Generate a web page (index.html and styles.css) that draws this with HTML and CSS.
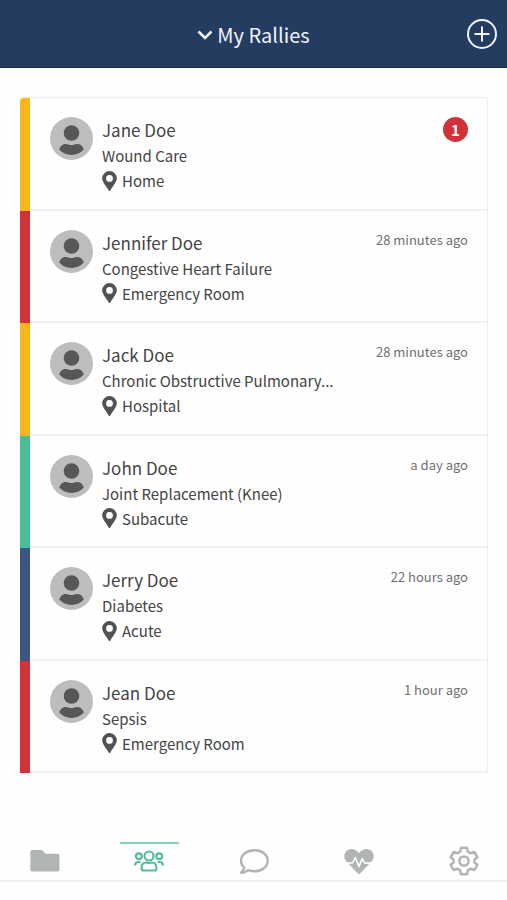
FILE: index.html
```html
<!DOCTYPE html>
<html lang="en">
<head>
<meta charset="utf-8">
<meta name="viewport" content="width=device-width, initial-scale=1">
<title>My Rallies</title>
<link rel="stylesheet" href="styles.css">
</head>
<body>
<svg class="sprite" aria-hidden="true">
  <symbol id="avatar" viewBox="0 0 43 43">
    <circle cx="21.500" cy="21.500" r="21.500" fill="#bdbdbd"/>
    <circle cx="21.500" cy="16" r="7.800" fill="#575757"/>
    <path d="M9.200 32.500C10.500 28.500 13 27 16 27q1.500 0 2.500.4a9 9 0 0 0 6 0q1-.4 2.500-.4c3 0 5.500 1.500 6.800 5.500-3 3.400-7.300 5.400-12.300 5.400s-9.300-2-12.300-5.400z" fill="#575757"/>
  </symbol>
  <symbol id="pin" viewBox="0 0 15 20">
    <path fill="#505253" fill-rule="evenodd" d="M7.500 0A7.300 7.300 0 0 0 .2 7.300c0 2.600 1 4 6.500 12.100a1 1 0 0 0 1.600 0c5.500-8.100 6.500-9.500 6.500-12.100A7.300 7.300 0 0 0 7.500 0zm0 4a3.400 3.400 0 1 1 0 6.800 3.400 3.400 0 0 1 0-6.800z"/>
  </symbol>
</svg>

<header class="topbar">
  <button class="title" type="button">
    <svg width="16" height="10" viewBox="0 0 16 10" aria-hidden="true"><path d="M1.500 1.500 8 8l6.500-6.500" fill="none" stroke="currentColor" stroke-width="2.600"/></svg>
    My Rallies
  </button>
  <button class="add" type="button" aria-label="Add rally">
    <svg width="30" height="30" viewBox="0 0 30 30" aria-hidden="true"><g fill="none" stroke="currentColor" stroke-width="2"><circle cx="15" cy="15" r="14"/><path d="M7.500 15h15M15 7.500v15"/></g></svg>
  </button>
</header>

<main class="content">
  <ul class="rallies">
    <li class="rally amber">
      <svg class="avatar" aria-hidden="true"><use href="#avatar"/></svg>
      <div class="details">
        <h2>Jane Doe</h2>
        <p>Wound Care</p>
        <p class="place"><svg class="pin" aria-hidden="true"><use href="#pin"/></svg>Home</p>
      </div>
      <span class="badge">1</span>
    </li>
    <li class="rally red">
      <svg class="avatar" aria-hidden="true"><use href="#avatar"/></svg>
      <div class="details">
        <h2>Jennifer Doe</h2>
        <p>Congestive Heart Failure</p>
        <p class="place"><svg class="pin" aria-hidden="true"><use href="#pin"/></svg>Emergency Room</p>
      </div>
      <time>28 minutes ago</time>
    </li>
    <li class="rally amber">
      <svg class="avatar" aria-hidden="true"><use href="#avatar"/></svg>
      <div class="details">
        <h2>Jack Doe</h2>
        <p>Chronic Obstructive Pulmonary...</p>
        <p class="place"><svg class="pin" aria-hidden="true"><use href="#pin"/></svg>Hospital</p>
      </div>
      <time>28 minutes ago</time>
    </li>
    <li class="rally green">
      <svg class="avatar" aria-hidden="true"><use href="#avatar"/></svg>
      <div class="details">
        <h2>John Doe</h2>
        <p>Joint Replacement (Knee)</p>
        <p class="place"><svg class="pin" aria-hidden="true"><use href="#pin"/></svg>Subacute</p>
      </div>
      <time>a day ago</time>
    </li>
    <li class="rally blue">
      <svg class="avatar" aria-hidden="true"><use href="#avatar"/></svg>
      <div class="details">
        <h2>Jerry Doe</h2>
        <p>Diabetes</p>
        <p class="place"><svg class="pin" aria-hidden="true"><use href="#pin"/></svg>Acute</p>
      </div>
      <time>22 hours ago</time>
    </li>
    <li class="rally red">
      <svg class="avatar" aria-hidden="true"><use href="#avatar"/></svg>
      <div class="details">
        <h2>Jean Doe</h2>
        <p>Sepsis</p>
        <p class="place"><svg class="pin" aria-hidden="true"><use href="#pin"/></svg>Emergency Room</p>
      </div>
      <time>1 hour ago</time>
    </li>
  </ul>
</main>

<nav class="tabs" aria-label="Main">
  <a class="tab" href="#files" aria-label="Files">
    <svg width="30" height="30" viewBox="0 0 30 30" aria-hidden="true"><path fill="currentColor" d="M2.500 4h8.700c.6 0 1 .2 1.400.6l2.500 2.700c.3.400.8.500 1.300.5h11c1.300 0 2.100.8 2.100 2.100v13.500c0 1.300-.8 2.100-2.100 2.100H2.500C1.200 25.500.4 24.700.4 23.400V6.100C.4 4.800 1.200 4 2.500 4z"/></svg>
  </a>
  <a class="tab active" href="#rallies" aria-label="Rallies" aria-current="page">
    <svg width="30" height="30" viewBox="0 0 30 30" aria-hidden="true"><g fill="none" stroke="currentColor" stroke-width="2.200"><circle cx="15" cy="10" r="4.500"/><circle cx="4.800" cy="10.200" r="2.900"/><circle cx="25.200" cy="10.200" r="2.900"/><path d="M7.500 22.500c0-4 1.700-6 4.500-6 1 0 1.500.6 3 .6s2-.6 3-.6c2.800 0 4.500 2 4.500 6 0 1.300-.6 2-1.900 2H9.400c-1.300 0-1.900-.7-1.900-2zM1.100 19.500c0-2.300 1.200-3.500 3.200-3.500h2.200M28.900 19.500c0-2.300-1.200-3.500-3.200-3.500h-2.200"/></g></svg>
  </a>
  <a class="tab" href="#messages" aria-label="Messages">
    <svg width="30" height="30" viewBox="0 0 30 30" aria-hidden="true"><path fill="none" stroke="currentColor" stroke-width="2.400" stroke-linejoin="round" d="M15.500 4.200C8 4.200 2 8.800 2 14.700c0 2.700 1.200 5.100 3.200 7-.5 2-1.700 3.600-3.300 5.100 3.100 0 5.700-1.200 7.200-2.600 1.900.7 4 1.100 6.400 1.100 7.500 0 13.200-4.700 13.200-10.600S23 4.200 15.500 4.200z"/></svg>
  </a>
  <a class="tab" href="#health" aria-label="Health">
    <svg width="30" height="30" viewBox="0 0 30 30" aria-hidden="true"><path fill="currentColor" d="M2.300 15.200C-.8 11.500-.2 7 3 4.500c3.300-2.400 7.700-1.900 10.500 1L15 7l1.500-1.500c2.800-2.900 7.200-3.400 10.500-1 3.200 2.500 3.800 7 .7 10.700L15.900 27.700c-.5.6-1.300.6-1.800 0z"/><path fill="none" stroke="#fff" stroke-width="1.600" stroke-linejoin="round" d="M0 17h8.500l2.800-5.500L15 20.500l3.200-8 2.300 4.500H30"/></svg>
  </a>
  <a class="tab" href="#settings" aria-label="Settings">
    <svg width="30" height="30" viewBox="0 0 30 30" aria-hidden="true"><g fill="none" stroke="currentColor" stroke-width="2.500" stroke-linejoin="round"><path d="M12 1.700h6l.8 3.900 2.900 1.700 3.700-1.300 3 5.200-3 2.600v2.400l3 2.600-3 5.200-3.700-1.300-2.900 1.700-.8 3.900h-6l-.8-3.900-2.900-1.700L4.600 24l-3-5.200 3-2.600v-2.400l-3-2.600 3-5.200 3.700 1.300 2.900-1.700z"/><circle cx="15" cy="15" r="4.600"/></g></svg>
  </a>
</nav>
</body>
</html>
```

FILE: styles.css
```css
* {
  box-sizing: border-box;
}

body {
  display: flex;
  flex-direction: column;
  min-height: 100vh;
  margin: 0;
  padding-bottom: 18px;
  background: #fefefe;
  color: #444;
  font-family: "Noto Sans CJK SC", "Noto Sans", sans-serif;
}

.sprite {
  display: none;
}

svg {
  display: block;
  flex: none;
}

button {
  padding: 0;
  border: 0;
  background: none;
  color: inherit;
  font: inherit;
}

.topbar {
  display: grid;
  grid-template-columns: 1fr auto 1fr;
  align-items: center;
  height: 68px;
  padding: 0 10px;
  border-bottom: 1px solid #1c3050;
  background: #253c61;
  color: #eef3fa;
}

.title {
  display: flex;
  grid-column: 2;
  align-items: center;
  gap: 4px;
  padding-top: 2px;
  font-size: 20px;
  line-height: 28px;
}

.add {
  justify-self: end;
}

.content {
  display: flex;
  flex: 1;
  flex-direction: column;
  padding: 29px 19px 69px 20px;
}

.rallies {
  display: grid;
  flex: 1;
  grid-auto-rows: 1fr;
  margin: 0;
  padding: 0;
  overflow: hidden;
  border: solid #eee;
  border-width: 1px 1px 0 0;
  border-radius: 4px 4px 0 0;
  list-style: none;
}

.rally {
  display: flex;
  align-items: flex-start;
  padding: 19px 19px 0 20px;
  border-left: 10px solid;
  background: linear-gradient(#f1f1f1, #f1f1f1) bottom / 100% 2px no-repeat;
}

.amber { border-color: #fdb51e; }
.red { border-color: #d03238; }
.green { border-color: #48bd98; }
.blue { border-color: #3b5680; }

.avatar {
  width: 43px;
  height: 43px;
}

.details {
  flex: 1;
  min-width: 0;
  margin-left: 9px;
}

h2,
p {
  margin: 0;
  font-weight: 400;
  white-space: nowrap;
}

h2 {
  font-size: 17px;
  line-height: 26px;
}

p {
  font-size: 15px;
  line-height: 25px;
}

.place {
  display: flex;
  align-items: center;
  gap: 5px;
}

.pin {
  width: 15px;
  height: 20px;
}

time {
  color: #707070;
  font-size: 13px;
  line-height: 20px;
}

.badge {
  width: 25px;
  height: 25px;
  border-radius: 50%;
  background: #d03238;
  color: #fff;
  font-size: 15px;
  font-weight: 700;
  line-height: 25px;
  text-align: center;
}

.tabs {
  display: flex;
  justify-content: space-between;
  padding: 0 14px 0 15px;
  border-bottom: 2px solid #eee;
}

.tab {
  display: flex;
  justify-content: center;
  width: 59px;
  padding: 2px 0 4px;
  border-top: 2px solid transparent;
  color: #b1b4b4;
}

.active {
  border-color: #7fd0b5;
  color: #55be99;
}
```
